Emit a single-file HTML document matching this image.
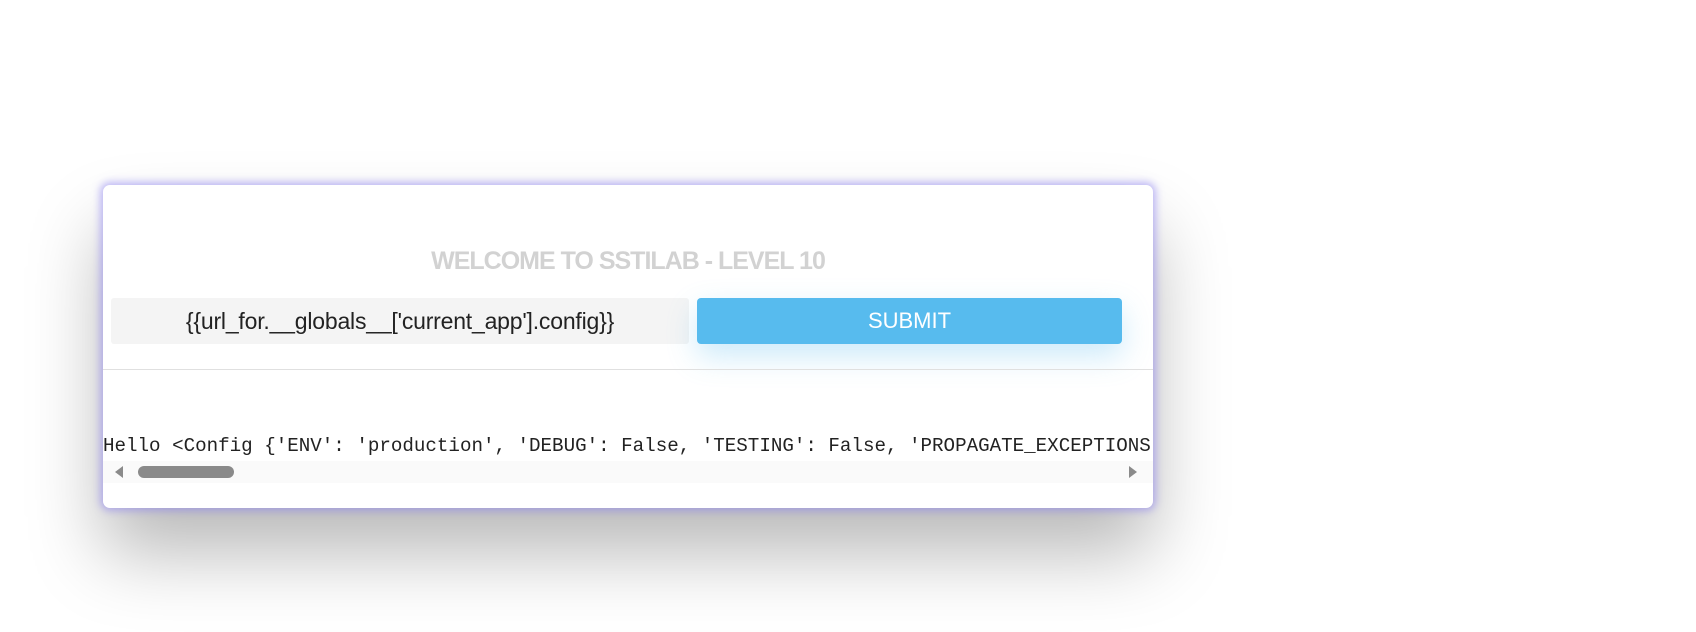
<!DOCTYPE html>
<html><head><meta charset="utf-8"><style>
html,body{margin:0;padding:0;width:1696px;height:632px;background:#fff;overflow:hidden;font-family:"Liberation Sans",sans-serif}
.card{position:absolute;left:103px;top:185px;width:1050px;height:323px;background:#fff;border-radius:7px;
box-shadow:0 0 8px 3px rgba(140,130,240,.55),0 45px 75px rgba(0,0,0,.28);overflow:hidden}
.title{position:absolute;left:0;width:100%;top:62px;text-align:center;font-weight:bold;font-size:25px;color:#d2d2d2;letter-spacing:-1px}
.inp{position:absolute;left:8px;top:113px;width:578px;height:46px;background:#f4f4f4;border-radius:3px;text-align:center;line-height:46px;font-size:23px;color:#222;letter-spacing:-0.2px}
.btn{position:absolute;left:594px;top:113px;width:425px;height:46px;background:#57bbee;border-radius:4px;color:#fff;text-align:center;line-height:46px;font-size:22px;box-shadow:0 12px 30px rgba(87,187,238,.3)}
.hr{position:absolute;left:0;width:100%;top:184px;height:1px;background:#e0e0e0}
.pre{position:absolute;left:0;top:249px;width:1050px;white-space:nowrap;overflow:hidden;font-family:"Liberation Mono",monospace;font-size:19.2px;color:#222;line-height:24px}
.track{position:absolute;left:0;top:276px;width:1050px;height:22px;background:#fafafa}
.thumb{position:absolute;left:35px;top:5px;width:96px;height:12px;border-radius:6px;background:#8a8a8a}
.la{position:absolute;left:12px;top:5px;width:0;height:0;border-top:6px solid transparent;border-bottom:6px solid transparent;border-right:8px solid #8a8a8a}
.ra{position:absolute;left:1026px;top:5px;width:0;height:0;border-top:6px solid transparent;border-bottom:6px solid transparent;border-left:8px solid #8a8a8a}
</style></head><body>
<div class="card">
<div class="title">WELCOME TO SSTILAB - LEVEL 10</div>
<div class="inp">{{url_for.__globals__['current_app'].config}}</div>
<div class="btn">SUBMIT</div>
<div class="hr"></div>
<div class="pre">Hello &lt;Config {'ENV': 'production', 'DEBUG': False, 'TESTING': False, 'PROPAGATE_EXCEPTIONS': None, 'SECRET_KEY': None}&gt;</div>
<div class="track"><div class="la"></div><div class="thumb"></div><div class="ra"></div></div>
</div>
</body></html>
